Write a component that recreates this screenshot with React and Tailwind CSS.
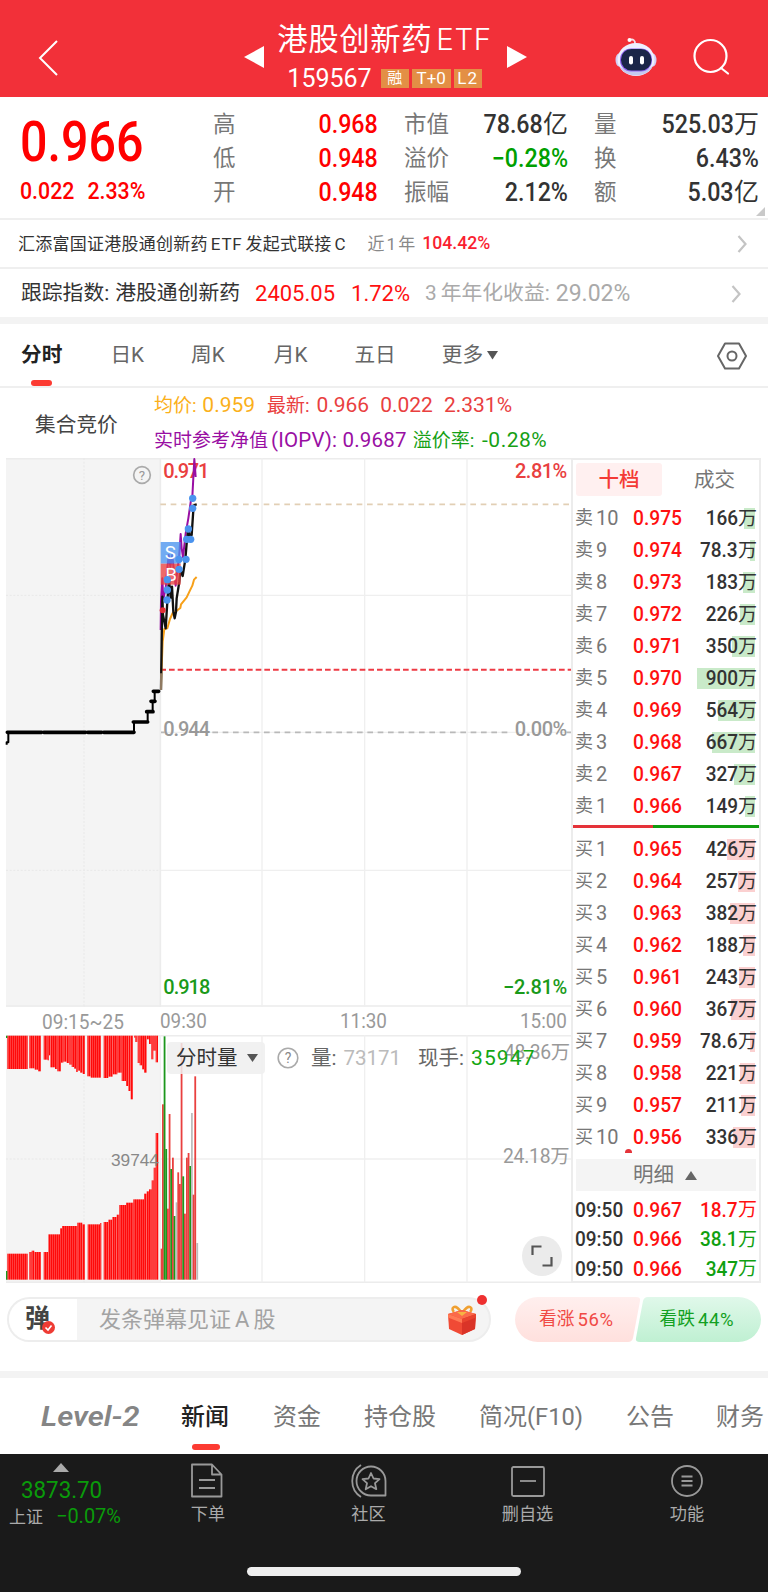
import React from "react";
import clsx from "clsx";

const RED = "#e9403f";
const GREEN = "#1a9a1a";

const quoteColumns = [
  {
    width: "mr-[26px] w-[165px]",
    items: [
      { label: "高", value: "0.968", color: "text-[#ff0000]" },
      { label: "低", value: "0.948", color: "text-[#ff0000]" },
      { label: "开", value: "0.948", color: "text-[#ff0000]" },
    ],
  },
  {
    width: "mr-[26px] w-[164px]",
    items: [
      { label: "市值", value: "78.68", unit: "亿" },
      { label: "溢价", value: "−0.28%", color: "text-[#00a000]" },
      { label: "振幅", value: "2.12%" },
    ],
  },
  {
    width: "w-[165px]",
    items: [
      { label: "量", value: "525.03", unit: "万" },
      { label: "换", value: "6.43%" },
      { label: "额", value: "5.03", unit: "亿" },
    ],
  },
];

const sells = [
  [10, "0.975", "166", 11],
  [9, "0.974", "78.3", 5],
  [8, "0.973", "183", 12],
  [7, "0.972", "226", 15],
  [6, "0.971", "350", 23],
  [5, "0.970", "900", 58],
  [4, "0.969", "564", 37],
  [3, "0.968", "667", 43],
  [2, "0.967", "327", 21],
  [1, "0.966", "149", 10],
];

const buys = [
  [1, "0.965", "426", 28],
  [2, "0.964", "257", 17],
  [3, "0.963", "382", 25],
  [4, "0.962", "188", 12],
  [5, "0.961", "243", 16],
  [6, "0.960", "367", 24],
  [7, "0.959", "78.6", 5],
  [8, "0.958", "221", 15],
  [9, "0.957", "211", 14],
  [10, "0.956", "336", 22],
];

const trades = [
  ["09:50", "0.967", "18.7", "text-[#ff1010]"],
  ["09:50", "0.966", "38.1", "text-[#10a010]"],
  ["09:50", "0.966", "347", "text-[#10a010]"],
];

// [x1, x2, edge] in chart units (3 per pixel)
const auctionTop = [
  [22, 83, 206], [88, 104, 204], [104, 114, 208], [114, 123, 213],
  [131, 143, 178], [143, 147, 180], [147, 151, 165], [151, 165, 201],
  [165, 172, 206], [172, 183, 213], [183, 190, 187], [190, 200, 184],
  [200, 208, 188], [208, 215, 193], [215, 222, 200], [222, 228, 205],
  [228, 233, 215], [233, 240, 211], [240, 248, 217], [248, 255, 221],
  [262, 272, 228], [272, 303, 232], [311, 325, 233], [325, 338, 229],
  [338, 352, 222], [352, 365, 217], [365, 378, 242], [378, 385, 257],
  [385, 392, 272], [392, 399, 297], [402, 406, 112], [406, 412, 125],
  [413, 419, 188], [419, 426, 195], [426, 432, 207], [432, 440, 217],
  [441, 447, 117], [447, 454, 131], [454, 460, 177], [460, 467, 151],
  [467, 474, 186],
];

const auctionBottom = [
  [22, 83, 760], [88, 95, 755], [95, 103, 751], [103, 123, 755],
  [131, 145, 755], [145, 180, 702], [180, 186, 684], [186, 232, 677],
  [232, 247, 667], [247, 255, 672], [263, 300, 672], [300, 304, 668],
  [311, 325, 665], [325, 337, 658], [337, 350, 650], [350, 358, 643],
  [358, 378, 614], [378, 400, 607], [400, 432, 597], [432, 440, 580],
  [440, 447, 573], [447, 455, 567], [455, 461, 540], [461, 467, 502],
  [467, 475, 398],
];

const minuteVolume = [
  [482, 745, "r"], [486, 312, "r"], [491, 108, "g"], [496, 446, "g"],
  [501, 625, "r"], [506, 341, "r"], [511, 506, "g"], [516, 472, "r"],
  [521, 647, "g"], [527, 606, "n"], [532, 516, "r"], [537, 551, "r"],
  [542, 128, "r"], [547, 528, "g"], [552, 640, "r"], [558, 472, "r"],
  [563, 458, "r"], [568, 497, "g"], [573, 338, "n"], [578, 583, "r"],
  [583, 228, "r"], [589, 728, "n"],
];

const volumeColors = { r: "#e9403f", g: "#1c971c", n: "#bdbdbd" };

const blueDots = [
  [578, 130], [578, 160], [565, 222], [560, 253], [572, 253], [558, 313],
  [537, 313], [537, 343], [502, 374], [502, 405], [501, 435],
];

const Header = () => (
  <header className="flex h-[97px] items-center bg-[#f23039] text-white">
    <svg width="22" height="38" viewBox="0 0 22 38" className="mt-[19px] ml-[37px]" fill="none" stroke="white" strokeWidth="2">
      <path d="M20 2 L3 19 L20 36" />
    </svg>
    <svg width="20" height="22" viewBox="0 0 20 22" className="mt-[17px] ml-[185px]" fill="white">
      <path d="M0 11 L20 0 V22 Z" />
    </svg>
    <div className="mt-[16px] flex w-[241px] flex-col items-center">
      <h1 className="flex -translate-y-px items-baseline text-[30.4px] leading-[34px] tracking-[0.6px] whitespace-nowrap">
        港股创新药
        <span className="ml-[4px] font-['Inter'] text-[29.5px] font-light">ETF</span>
      </h1>
      <div className="mt-[8px] flex items-center leading-none">
        <span className="mr-[9px] text-[25px]">159567</span>
        <span className="mr-[3px] flex h-[19px] w-[28px] items-center justify-center bg-[#e38f45] text-[15px]">融</span>
        <span className="mr-[3px] flex h-[19px] w-[39px] items-center justify-center bg-[#e38f45] text-[17px]">T+0</span>
        <span className="flex h-[19px] w-[28px] items-center justify-center bg-[#e38f45] text-[17px] tracking-[1px]">L2</span>
      </div>
    </div>
    <svg width="20" height="22" viewBox="0 0 20 22" className="mt-[17px] ml-[2px]" fill="white">
      <path d="M20 11 L0 0 V22 Z" />
    </svg>
    <svg width="42" height="40" viewBox="0 0 42 40" className="mt-[16px] ml-[88px]">
      <path d="M14.500 3 C18 1.500 20.500 3.500 20 7" fill="none" stroke="#f4dfe8" strokeWidth="1.800" strokeLinecap="round" />
      <circle cx="14.500" cy="3" r="2" fill="white" />
      <ellipse cx="4" cy="23" rx="3.500" ry="6.500" fill="#d3d0f5" />
      <ellipse cx="38" cy="23" rx="3.500" ry="6.500" fill="#d3d0f5" />
      <ellipse cx="21" cy="22.500" rx="18.500" ry="16.500" fill="#eef0ff" />
      <path d="M4 28 C9 42 33 42 38 28 C33 36 9 36 4 28Z" fill="#c6c9f0" />
      <rect x="5" y="11.500" width="32" height="23" rx="11" fill="#8f63ef" />
      <rect x="6" y="12" width="30.500" height="21.500" rx="10.500" fill="#1b2648" />
      <rect x="14" y="19" width="4" height="8.500" rx="2" fill="white" />
      <rect x="25" y="19" width="4" height="8.500" rx="2" fill="white" />
    </svg>
    <svg width="38" height="38" viewBox="0 0 38 38" className="mt-[17px] ml-[36px]" fill="none" stroke="white" strokeWidth="2.200">
      <circle cx="17.500" cy="18" r="16" />
      <path d="M28 30 L35 35.500" strokeLinecap="round" />
    </svg>
  </header>
);

const Quote = () => (
  <section className="relative flex h-[123px] border-b-2 border-[#efefef]">
    <div className="w-[213px] pl-[20px] text-[#ff0000]">
      <div className="mt-[17px] h-[56px] origin-left scale-x-[0.88] text-[55px] leading-[56px] font-medium">0.966</div>
      <div className="mt-[8px] flex origin-left scale-x-[0.87] gap-[15px] text-[24.5px] leading-[26px] font-medium whitespace-nowrap">
        <span>0.022</span>
        <span>2.33%</span>
      </div>
    </div>
    <div className="flex pt-[10px]">
      {quoteColumns.map((column, index) => (
        <div key={index} className={column.width}>
          {column.items.map((item) => (
            <div key={item.label} className="flex h-[34px] items-center justify-between text-[22.5px] leading-none">
              <span className="text-[#777]">{item.label}</span>
              <span className={clsx("flex items-center font-medium", item.color || "text-[#333]")}>
                <span className="origin-right scale-x-[0.93] text-[25px]">{item.value}</span>
                {item.unit && <span className="text-[25px] font-normal">{item.unit}</span>}
              </span>
            </div>
          ))}
        </div>
      ))}
    </div>
    <svg width="9" height="9" viewBox="0 0 9 9" className="absolute right-[3px] bottom-[2px]">
      <path d="M9 0 V9 H0 Z" fill="#c9c9c9" />
    </svg>
  </section>
);

const Chevron = ({ className }) => (
  <svg width="10" height="18" viewBox="0 0 10 18" className={className} fill="none" stroke="#c4c4c4" strokeWidth="2.200">
    <path d="M1.500 1 L8.500 9 L1.500 17" />
  </svg>
);

const InfoRows = () => (
  <section>
    <div className="flex h-[49px] items-center border-b-2 border-[#efefef] pt-px pl-[18px] text-[17px] leading-none whitespace-nowrap text-[#333]">
      <span className="tracking-[0.25px]">汇添富国证港股通创新药</span>
      <span className="mx-[3px] tracking-[0.8px]">ETF</span>
      <span className="tracking-[0.2px]">发起式联接</span>
      <span className="ml-[3px]">C</span>
      <span className="ml-[22px] text-[#888]">近<span className="mx-[2px]">1</span>年</span>
      <span className="ml-[7px] text-[17.7px] font-medium text-[#fa1f31]">104.42%</span>
      <Chevron className="mr-[21px] ml-auto" />
    </div>
    <div className="flex h-[48px] items-center pt-px pl-[21px] text-[20.8px] leading-none whitespace-nowrap text-[#333]">
      <span>跟踪指数:</span>
      <span className="ml-[6px]">港股通创新药</span>
      <span className="ml-[15px] text-[22px] text-[#ff1010]">2405.05</span>
      <span className="ml-[16px] text-[22px] text-[#ff1010]">1.72%</span>
      <span className="ml-[15px] text-[#aaa]">3<span className="ml-[4px]">年年化收益:</span></span>
      <span className="ml-[6px] text-[23px] text-[#aaa]">29.02%</span>
      <Chevron className="mr-[27px] ml-auto" />
    </div>
    <div className="h-[7px] bg-[#f3f3f3]" />
  </section>
);

const periods = [
  { label: "日K", margin: "ml-[48px]" },
  { label: "周K", margin: "ml-[47px]" },
  { label: "月K", margin: "ml-[49px]" },
  { label: "五日", margin: "ml-[47px]" },
  { label: "更多", margin: "ml-[46px]" },
];

const PeriodTabs = () => (
  <nav className="flex h-[64px] items-center border-b-2 border-[#efefef] pt-px pl-[21px] text-[20.7px] leading-none text-[#666]">
    <div className="relative flex h-full items-center font-bold text-[#222]">
      分时
      <span className="absolute bottom-0 left-[10px] h-[6px] w-[21px] rounded-[3px] bg-[#fc3b32]" />
    </div>
    {periods.map((period) => (
      <span key={period.label} className={period.margin}>{period.label}</span>
    ))}
    <svg width="12" height="9" viewBox="0 0 12 9" className="ml-[4px]" fill="#555">
      <path d="M0 0 H11 L5.500 8.500 Z" />
    </svg>
    <svg width="30" height="28" viewBox="0 0 30 28" className="mr-[21px] ml-auto" fill="none" stroke="#666" strokeWidth="2">
      <path d="M8 1.500 H22 L29 14 L22 26.500 H8 L1 14 Z" strokeLinejoin="round" />
      <circle cx="15" cy="14" r="4.500" />
    </svg>
  </nav>
);

const ChartLegend = () => (
  <div className="flex h-[70px] text-[19px] leading-none whitespace-nowrap">
    <div className="flex w-[154px] items-center pt-[4px] pl-[35px] text-[20.7px] text-[#444]">集合竞价</div>
    <div className="flex flex-col">
      <div className="flex h-[35px] items-center text-[#e9403f]">
        <span className="text-[#fbb01a]">均价: <span className="ml-px text-[21px]">0.959</span></span>
        <span className="ml-[12px]">最新: <span className="ml-[2px] text-[21px]">0.966</span></span>
        <span className="ml-[11px] text-[21px]">0.022</span>
        <span className="ml-[11px] text-[21px]">2.331%</span>
      </div>
      <div className="flex h-[35px] items-center text-[#990fa3]">
        <span>实时参考净值<span className="ml-[3px] text-[20.5px] tracking-[0.2px]">(IOPV): 0.9687</span></span>
        <span className="ml-[6px] text-[#15a015]">溢价率: <span className="ml-[3px] text-[21px] tracking-[0.5px]">-0.28%</span></span>
      </div>
    </div>
  </div>
);

const PriceChart = () => (
  <svg width="571" height="549" viewBox="0 9 1713 1647" className="block font-['Roboto','Noto_Sans_CJK_SC',sans-serif]">
    <rect x="18" y="9" width="463" height="1647" fill="#f4f4f4" />
    <g stroke="#ececec" strokeWidth="4" fill="none">
      <path d="M18 11 H1713 M18 1653 H1713 M481 9 V1656" strokeWidth="5" />
      <path d="M481 421 H1713 M481 1246 H1713 M786 9 V1656 M1094 9 V1656 M1401 9 V1656" stroke="#efefef" />
      <path d="M481 832 H1713" stroke="#efefef" />
      <path d="M18 421 H481 M18 1246 H481 M252 9 V1656" stroke="#e8e8e8" strokeDasharray="6 5" strokeWidth="3" />
    </g>
    <path d="M481 148 H1713" stroke="#e2cfb5" strokeWidth="5" strokeDasharray="17 14" />
    <path d="M481 644 H1713" stroke="#ee3b44" strokeWidth="6" strokeDasharray="17 9" />
    <path d="M637 832 H1530" stroke="#b9b9b9" strokeWidth="5" strokeDasharray="17 14" />
    <path d="M1700 832 H1713 M483 832 H494" stroke="#b9b9b9" strokeWidth="5" />

    <g fill="none" stroke="#000" strokeLinejoin="round">
      <path d="M20 869 V862 H25 V832 H402 V801 H443 V770 H458 V739 H464 V709 H478" strokeWidth="6" />
      <path d="M22 832 H125 M131 832 H257 M263 832 H305 M311 832 H402 M400 801 H443 M440 770 H459 M453 739 H465 M460 709 H476" strokeWidth="11" strokeLinecap="round" />
    </g>

    <circle cx="426" cy="60" r="25" fill="none" stroke="#aaa" strokeWidth="5" />
    <text x="426" y="74" fontSize="40" textAnchor="middle" fill="#999">?</text>

    <g fontSize="60" fontWeight="500">
      <text x="490" y="69" textLength="138" fill={RED}>0.971</text>
      <text x="1702" y="69" textAnchor="end" textLength="157" fill={RED}>2.81%</text>
      <text x="490" y="843" textLength="140" fill="#999">0.944</text>
      <text x="1702" y="843" textAnchor="end" textLength="158" fill="#999">0.00%</text>
      <text x="490" y="1618" textLength="141" fill={GREEN}>0.918</text>
      <text x="1702" y="1618" textAnchor="end" textLength="193" fill={GREEN}>−2.81%</text>
    </g>

    <g fill="none" strokeWidth="6" strokeLinejoin="round">
      <path d="M483 705 L484 660 L488 560 L493 522 L502 520 L510 492 L518 474 L532 466 L541 459 L543 448 L560 427 L570 406 L577 392 L582 374 L590 366" stroke="#f7a019" />
      <path d="M482 525 L483 440 L487 370 L490 432 L497 400 L501 350 L506 300 L511 335 L517 300 L522 350 L527 392 L532 345 L537 310 L542 237 L545 280 L549 307 L557 235 L565 190 L573 135 L577 125 L583 12 L587 66" stroke="#990fa3" />
      <path d="M483 705 L485 560 L487 425 L489 480 L497 520 L502 440 L507 372 L512 428 L516 395 L520 470 L524 490 L528 470 L530 430 L538 380 L541 345 L548 363 L556 313 L561 253 L565 222 L570 245 L575 240 L580 165 L583 150 L590 148" stroke="#111" strokeWidth="7" />
      <path d="M483 705 V655" stroke="#8f7a62" />
    </g>

    <rect x="482" y="261" width="60" height="65" fill="#4a93ee" fillOpacity="0.78" />
    <rect x="482" y="326" width="60" height="63" fill="#e9403f" fillOpacity="0.78" />
    <g fontSize="56" fill="white" textAnchor="middle">
      <text x="511" y="313">S</text>
      <text x="513" y="378">B</text>
    </g>
    <circle cx="488" cy="466" r="9" fill="#e02f36" />
    {blueDots.map(([x, y]) => (
      <circle key={`${x}-${y}`} cx={x} cy={y} r="11" fill="#4a93ee" />
    ))}
  </svg>
);

const VolumeChart = () => (
  <svg width="571" height="248" viewBox="0 104 1713 744" className="block font-['Roboto','Noto_Sans_CJK_SC',sans-serif]">
    <defs>
      <pattern id="stripes" width="6" height="10" patternUnits="userSpaceOnUse">
        <rect width="6" height="10" fill="#ff0a0a" />
        <rect width="1.500" height="10" fill="#ff7070" />
      </pattern>
    </defs>
    <rect x="18" y="104" width="463" height="741" fill="#f4f4f4" />
    <g stroke="#ececec" strokeWidth="5" fill="none">
      <path d="M18 106 H1713 M18 846 H1713" />
      <path d="M481 476 H1713 M481 104 V846 M786 104 V846 M1094 104 V846 M1401 104 V846" stroke="#efefef" strokeWidth="4" />
      <path d="M18 476 H481 M252 104 V846" stroke="#e8e8e8" strokeDasharray="6 5" strokeWidth="3" />
    </g>
    {auctionTop.map(([x1, x2, y]) => (
      <rect key={x1} x={x1} y="106" width={x2 - x1} height={y - 106} fill="url(#stripes)" />
    ))}
    {auctionBottom.map(([x1, x2, y]) => (
      <rect key={x1} x={x1} y={y} width={x2 - x1} height={838 - y} fill="url(#stripes)" />
    ))}
    <path d="M18 106 h4 v7 h-4 z M18 812 h4 v26 h-4 z" fill="#1c971c" />
    {minuteVolume.map(([x, y, color]) => (
      <rect key={x} x={x} y={y} width="5.400" height={838 - y} fill={volumeColors[color]} />
    ))}
    <text x="333" y="497" fontSize="52" textLength="144" fill="#888" className="font-['Liberation_Sans']">39744</text>
    <g fontSize="58" fill="#999">
      <text x="1512" y="175" textLength="198">48.36万</text>
      <text x="1509" y="489" textLength="200">24.18万</text>
    </g>
  </svg>
);

const VolumePanel = () => (
  <div className="relative h-[248px]">
    <VolumeChart />
    <div className="absolute top-[7px] left-[167px] flex h-[32px] items-center text-[20.5px] leading-none whitespace-nowrap">
      <div className="flex h-[32px] w-[98px] items-center rounded-[4px] bg-[#efefef]/85 pl-[9px] text-[#333]">
        分时量
        <svg width="11" height="8" viewBox="0 0 11 8" className="ml-[9px]" fill="#555">
          <path d="M0 0 H11 L5.500 8 Z" />
        </svg>
      </div>
      <svg width="22" height="22" viewBox="0 0 22 22" className="ml-[12px]">
        <circle cx="11" cy="11" r="9.800" fill="none" stroke="#aaa" strokeWidth="1.600" />
        <text x="11" y="16" fontSize="14" textAnchor="middle" fill="#888">?</text>
      </svg>
      <span className="ml-[12px] text-[#666]">量:</span>
      <span className="ml-[7px] text-[#bbb]">73171</span>
      <span className="ml-[17px] text-[#666]">现手:</span>
      <span className="ml-[7px] text-[21px] tracking-[1.1px] text-[#12a612]">35947</span>
    </div>
    <button className="absolute right-[9px] bottom-[7px] flex h-[40px] w-[40px] items-center justify-center rounded-full bg-[#ebebeb]">
      <svg width="22" height="22" viewBox="0 0 22 22" fill="none" stroke="#555" strokeWidth="2.200">
        <path d="M1.500 10 V1.500 H10.500 M20.500 12 V20.500 H11.500" />
      </svg>
    </button>
  </div>
);

const TimeAxis = () => (
  <div className="flex h-[28px] items-center text-[20.5px] leading-none text-[#999]">
    <span className="ml-[42px] w-[119px] pt-[2px]"><span className="inline-block origin-left scale-x-[0.93]">09:15~25</span></span>
    <span className="w-[182px]"><span className="inline-block origin-left scale-x-[0.92]">09:30</span></span>
    <span className="w-[182px]"><span className="inline-block origin-left scale-x-[0.92]">11:30</span></span>
    <span className="origin-left scale-x-[0.92]">15:00</span>
  </div>
);

const DepthRow = ({ side, level, price, volume, bar }) => (
  <div className="flex h-[32px] items-center text-[20px] leading-none whitespace-nowrap">
    <span className="flex w-[58px] items-center text-[#777]">
      <span className="mr-[3px] text-[18px]">{side}</span>
      {level}
    </span>
    <span className="origin-left scale-x-[0.96] font-medium text-[#ff1010]">{price}</span>
    <span className="relative ml-auto flex items-center text-[#333]">
      <span
        className={clsx("absolute right-[2px] h-[21px]", side === "卖" ? "bg-[#c9eac9]" : "bg-[#fbd0d0]")}
        style={{ width: bar }}
      />
      <span className="relative origin-right scale-x-[0.95] font-medium">{volume}</span>
      <span className="relative text-[19px]">万</span>
    </span>
  </div>
);

const OrderBook = () => (
  <aside className="flex h-[825px] w-[190px] flex-col border-2 border-[#ececec]">
    <div className="mt-[3px] flex h-[33px] shrink-0 items-center px-[3px] text-[20.5px] leading-none">
      <div className="flex h-full w-[86px] items-center justify-center rounded-[3px] bg-[#fff0f0] pt-[2px] font-medium text-[#f43a35]">十档</div>
      <div className="ml-[32px] pt-[2px] text-[#777]">成交</div>
    </div>
    <div className="mt-[6px] pr-[2px] pl-[2px]">
      {sells.map(([level, price, volume, bar]) => (
        <DepthRow key={level} side="卖" level={level} price={price} volume={volume} bar={bar} />
      ))}
    </div>
    <div className="mt-[3px] flex h-[3px] shrink-0">
      <div className="w-[80px] bg-[#e5333a]" />
      <div className="flex-1 bg-[#119c11]" />
    </div>
    <div className="mt-[5px] pr-[2px] pl-[2px]">
      {buys.map(([level, price, volume, bar]) => (
        <DepthRow key={level} side="买" level={level} price={price} volume={volume} bar={bar} />
      ))}
    </div>
    <div className="-mt-[4px] ml-[52px] h-[4px] w-[7px] shrink-0 rounded-t-full bg-[#e5333a]" />
    <div className="mt-[6px] mr-[3px] ml-[3px] flex h-[32px] shrink-0 items-center bg-[#f4f4f4] pl-[57px] text-[20.5px] leading-none text-[#777]">
      明细
      <svg width="12" height="9" viewBox="0 0 12 9" className="ml-[11px]" fill="#666">
        <path d="M0 9 H12 L6 0 Z" />
      </svg>
    </div>
    <div className="mt-[4px] pr-[2px] pl-[2px]">
      {trades.map(([time, price, volume, color], index) => (
        <div key={index} className="flex h-[29.5px] items-center text-[20px] leading-none font-medium">
          <span className="w-[58px] text-[#333]"><span className="inline-block origin-left scale-x-[0.95]">{time}</span></span>
          <span className="origin-left scale-x-[0.96] text-[#ff1010]">{price}</span>
          <span className={clsx("ml-auto flex items-center", color)}>
            <span className="origin-right scale-x-[0.95]">{volume}</span>
            <span className="text-[19px] font-normal">万</span>
          </span>
        </div>
      ))}
    </div>
  </aside>
);

const Gift = () => (
  <svg width="30" height="32" viewBox="0 0 30 32">
    <path d="M14 8 C8 -1 3 4 7 8 M16 8 C22 -1 27 4 23 8" fill="none" stroke="#f0a030" strokeWidth="2.600" />
    <path d="M15 6 L29 10 L28 25 L15 31 L2 25 L1 10 Z" fill="#f04a35" />
    <path d="M15 14 L29 10 L28 25 L15 31 Z" fill="#da3428" />
    <path d="M15 6 L29 10 L15 15 L1 10 Z" fill="#fb6a4a" />
    <path d="M1 10 L15 15 V19 L1 13.500 Z" fill="#ff7a55" />
    <path d="M29 10 L15 15 V19 L29 13.500 Z" fill="#e8442f" />
    <path d="M10 8 L20 8 L15 12 Z" fill="#f6b443" />
  </svg>
);

const BulletBar = () => (
  <section className="flex h-[88px] pt-[14px] pl-[7px] text-[22px] leading-none">
    <div className="relative flex h-[45px] w-[484px] items-center rounded-full border-2 border-[#ededed] bg-[#f4f4f4]">
      <div className="relative flex h-full w-[68px] items-center rounded-l-full bg-white pb-[2px] pl-[16px] text-[25px] font-bold text-[#444]">
        弹
        <svg width="13" height="13" viewBox="0 0 13 13" className="absolute top-[22px] left-[33px]">
          <circle cx="6.500" cy="6.500" r="6.500" fill="#ee3b34" />
          <path d="M3.500 6.500 L6 9 L9.500 4.500" fill="none" stroke="white" strokeWidth="1.600" />
        </svg>
      </div>
      <span className="ml-[22px] text-[#a3a3a3]">发条弹幕见证<span className="mx-[4px]">A</span>股</span>
      <div className="mr-[12px] ml-auto"><Gift /></div>
      <span className="absolute -top-[4px] right-[2px] h-[10px] w-[10px] rounded-full bg-[#ee3030]" />
    </div>
    <div className="relative ml-[24px] h-[45px] w-[246px] text-[17.7px]">
      <svg width="246" height="45" viewBox="0 0 246 45">
        <defs>
          <linearGradient id="up" x1="0" y1="0" x2="0" y2="1">
            <stop offset="0" stopColor="#ffefee" />
            <stop offset="1" stopColor="#ffe0dd" />
          </linearGradient>
          <linearGradient id="down" x1="0" y1="0" x2="0" y2="1">
            <stop offset="0" stopColor="#e0f8ea" />
            <stop offset="1" stopColor="#bff0d2" />
          </linearGradient>
        </defs>
        <path d="M22.500 0 H121 Q126 0 125 4 L118 41 Q117 45 113 45 H22.500 A22.500 22.500 0 0 1 22.500 0 Z" fill="url(#up)" />
        <path d="M133 0 H223.500 A22.500 22.500 0 0 1 223.500 45 H125 Q120 45 121 41 L128 4 Q129 0 133 0 Z" fill="url(#down)" />
      </svg>
      <div className="absolute inset-0 flex items-center pt-px whitespace-nowrap">
        <span className="ml-[24px] flex items-center text-[#f04a45]">看涨<span className="ml-[3px] text-[18.5px] tracking-[0.6px]">56%</span></span>
        <span className="ml-[46px] flex items-center text-[#12a022]">看跌<span className="ml-[3px] text-[18.5px] tracking-[0.6px]">44%</span></span>
      </div>
    </div>
  </section>
);

const NewsTabs = () => (
  <nav className="flex h-[76px] items-center overflow-hidden pt-[2px] pl-[41px] text-[24px] leading-none whitespace-nowrap text-[#777]">
    <span className="w-[140px]">
      <span className="inline-block origin-left scale-x-[1.14] text-[27px] font-semibold text-[#858585] italic">Level-2</span>
    </span>
    <span className="relative flex h-full items-center font-medium text-[#222]">
      新闻
      <span className="absolute bottom-[4px] left-[11px] h-[6px] w-[28px] rounded-[3px] bg-[#fc3b32]" />
    </span>
    <span className="ml-[44px]">资金</span>
    <span className="ml-[43px]">持仓股</span>
    <span className="ml-[43px]">简况<span className="text-[23.7px]">(F10)</span></span>
    <span className="ml-[43px]">公告</span>
    <span className="ml-[42px]">财务</span>
  </nav>
);

const NavItem = ({ label, className, children }) => (
  <div className={clsx("flex flex-col items-center", className)}>
    <svg width="36" height="36" viewBox="0 0 36 36" fill="none" stroke="#999" strokeWidth="1.800">
      {children}
    </svg>
    <span className="mt-[7px] text-[17.2px] leading-none text-[#aaa]">{label}</span>
  </div>
);

const BottomBar = () => (
  <footer className="flex h-[138px] flex-col bg-[#1a1a1a]">
    <div className="flex h-[81px] pt-[9px]">
      <div className="w-[128px]">
        <svg width="16" height="9" viewBox="0 0 16 9" className="ml-[53px]" fill="#aaa">
          <path d="M0 9 H16 L8 0 Z" />
        </svg>
        <div className="mt-[6px] ml-[21px] origin-left scale-x-[0.93] text-[24px] leading-[24px] text-[#0a9b0a]">3873.70</div>
        <div className="mt-[3px] ml-[9px] flex items-center whitespace-nowrap">
          <span className="pt-[2px] text-[17px] leading-[20px] text-[#aaa]">上证</span>
          <span className="ml-[13px] origin-left scale-x-[0.95] text-[21px] leading-[20px] text-[#0a9b0a]">−0.07%</span>
        </div>
      </div>
      <NavItem label="下单" className="w-[160px]">
        <path d="M4 1.500 H22 L31.500 11.500 V33.500 H2 V1.500 Z M22 1.500 V11.500 H31.500" strokeLinejoin="round" />
        <path d="M9 17 H25 M9 25 H25" />
      </NavItem>
      <NavItem label="社区" className="w-[161px]">
        <path d="M20 3.500 A14.500 14.500 0 1 0 20 32.500 H34.500 V18 A14.500 14.500 0 0 0 20 3.500 Z" strokeLinejoin="round" />
        <path d="M10 2 A19 19 0 0 0 10 34" />
        <path d="M20 10 L22.500 15.500 L28.500 16.200 L24 20.200 L25.300 26.200 L20 23.200 L14.700 26.200 L16 20.200 L11.500 16.200 L17.500 15.500 Z" strokeLinejoin="round" />
      </NavItem>
      <NavItem label="删自选" className="w-[157px]">
        <rect x="2" y="4" width="32" height="29" rx="1.500" />
        <path d="M10 18 H26" />
      </NavItem>
      <NavItem label="功能" className="w-[162px]">
        <circle cx="18" cy="18" r="15" />
        <path d="M12.500 13.500 H23.500 M12.500 18 H23.500 M12.500 22.500 H23.500" />
      </NavItem>
    </div>
    <div className="mx-auto mt-[32px] h-[9px] w-[274px] rounded-full bg-[#eee]" />
  </footer>
);

const App = () => (
  <div className="h-[1592px] w-[768px] overflow-hidden bg-white font-['Roboto','Noto_Sans_CJK_SC',sans-serif]">
    <Header />
    <Quote />
    <InfoRows />
    <PeriodTabs />
    <ChartLegend />
    <div className="flex h-[825px]">
      <div className="w-[571px]">
        <PriceChart />
        <TimeAxis />
        <VolumePanel />
      </div>
      <OrderBook />
    </div>
    <BulletBar />
    <div className="h-[7px] bg-[#f3f3f3]" />
    <NewsTabs />
    <BottomBar />
  </div>
);

export default App;
